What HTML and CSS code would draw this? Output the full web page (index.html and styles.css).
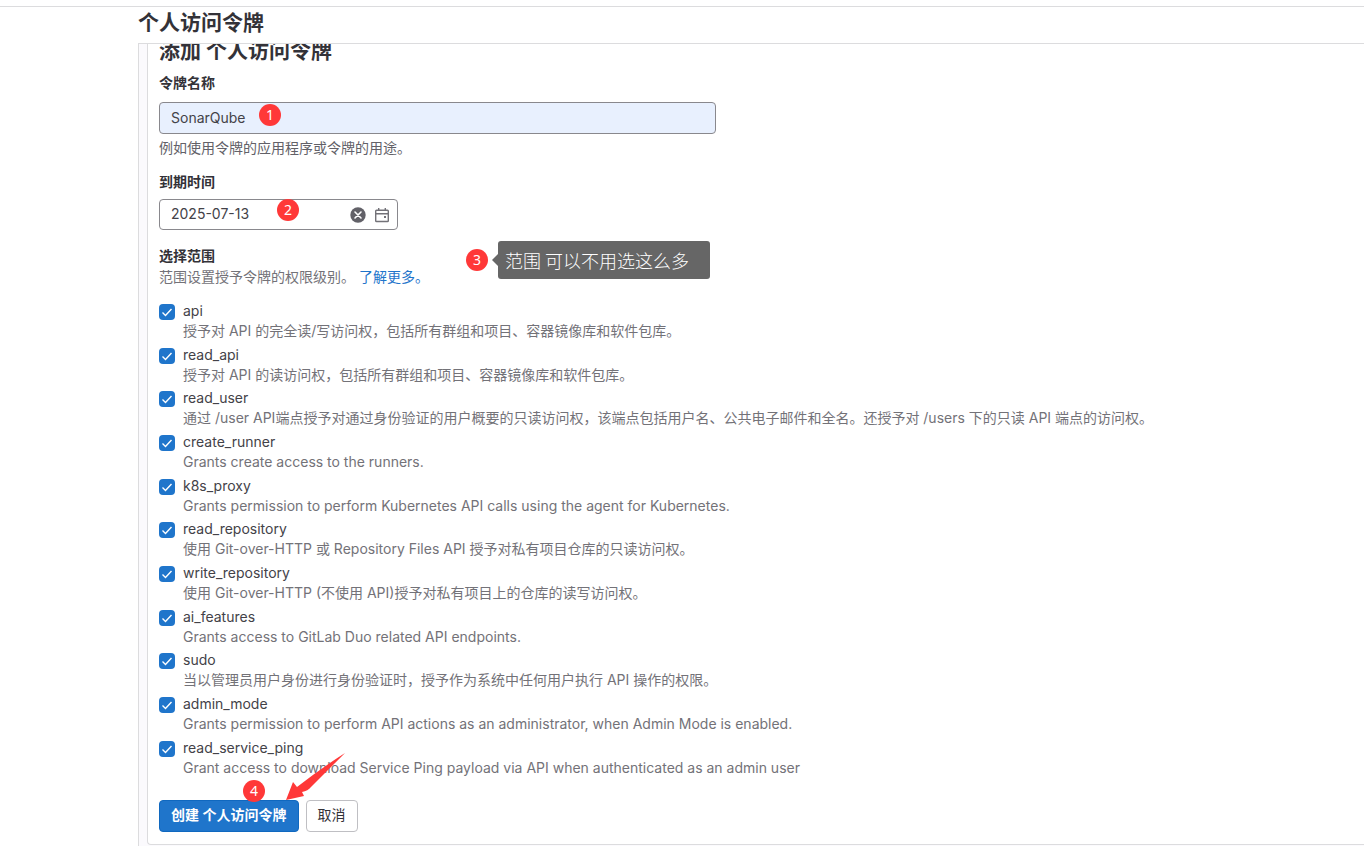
FILE: index.html
```html
<!DOCTYPE html>
<html lang="zh-CN">
<head>
    <meta charset="UTF-8">
    <meta name="viewport" content="width=device-width, initial-scale=1.0">
    <title>个人访问令牌</title>
    <link rel="stylesheet" href="styles.css">
</head>
<body>
    <div class="top-line"></div>
    <main class="page">
        <header class="page-header">
            <h1>个人访问令牌</h1>
        </header>
        <div class="panel">
            <form class="card">
                <h2 class="card-title">添加 个人访问令牌</h2>

                <!-- 令牌名称 -->
                <label class="field-label" for="token-name">令牌名称</label>
                <div class="name-field">
                    <input class="text-input name-input" id="token-name" type="text" value="SonarQube">
                    <span class="badge badge-name">1</span>
                </div>
                <p class="hint">例如使用令牌的应用程序或令牌的用途。</p>

                <!-- 到期时间 -->
                <label class="field-label" for="expires-at">到期时间</label>
                <div class="date-field">
                    <input class="text-input" id="expires-at" type="text" value="2025-07-13">
                    <div class="date-actions">
                        <button class="icon-button" type="button" aria-label="清除日期">
                            <svg width="16" height="16" viewBox="0 0 16 16">
                                <circle cx="8" cy="8" r="7.7" fill="#626168"/>
                                <path d="M5 5l6 6M11 5l-6 6" stroke="#fff" stroke-width="1.6" stroke-linecap="round"/>
                            </svg>
                        </button>
                        <button class="icon-button" type="button" aria-label="选择日期">
                            <svg width="16" height="16" viewBox="0 0 16 16" fill="none" stroke="#737278" stroke-width="1.4">
                                <rect x="1.7" y="3.2" width="12.6" height="11.3" rx="0.8"/>
                                <path d="M1.7 6.7h12.6M4.7 1v2.2M11.3 1v2.2"/>
                                <rect x="10" y="9" width="2" height="2" fill="#737278" stroke="none"/>
                            </svg>
                        </button>
                    </div>
                    <span class="badge badge-date">2</span>
                </div>

                <!-- 选择范围 -->
                <div class="scope-head">
                    <h3 class="field-label">选择范围</h3>
                    <p class="scope-text">范围设置授予令牌的权限级别。 <a href="#">了解更多。</a></p>
                    <span class="badge badge-scope">3</span>
                    <div class="callout">范围 可以不用选这么多</div>
                </div>

                <ul class="scopes">
                    <li class="scope">
                        <input type="checkbox" id="api" checked>
                        <label for="api">api</label>
                        <p>授予对 API 的完全读/写访问权，包括所有群组和项目、容器镜像库和软件包库。</p>
                    </li>
                    <li class="scope">
                        <input type="checkbox" id="read_api" checked>
                        <label for="read_api">read_api</label>
                        <p>授予对 API 的读访问权，包括所有群组和项目、容器镜像库和软件包库。</p>
                    </li>
                    <li class="scope">
                        <input type="checkbox" id="read_user" checked>
                        <label for="read_user">read_user</label>
                        <p>通过 /user API端点授予对通过身份验证的用户概要的只读访问权，该端点包括用户名、公共电子邮件和全名。还授予对 /users 下的只读 API 端点的访问权。</p>
                    </li>
                    <li class="scope">
                        <input type="checkbox" id="create_runner" checked>
                        <label for="create_runner">create_runner</label>
                        <p>Grants create access to the runners.</p>
                    </li>
                    <li class="scope">
                        <input type="checkbox" id="k8s_proxy" checked>
                        <label for="k8s_proxy">k8s_proxy</label>
                        <p>Grants permission to perform Kubernetes API calls using the agent for Kubernetes.</p>
                    </li>
                    <li class="scope">
                        <input type="checkbox" id="read_repository" checked>
                        <label for="read_repository">read_repository</label>
                        <p>使用 Git-over-HTTP 或 Repository Files API 授予对私有项目仓库的只读访问权。</p>
                    </li>
                    <li class="scope">
                        <input type="checkbox" id="write_repository" checked>
                        <label for="write_repository">write_repository</label>
                        <p>使用 Git-over-HTTP (不使用 API)授予对私有项目上的仓库的读写访问权。</p>
                    </li>
                    <li class="scope">
                        <input type="checkbox" id="ai_features" checked>
                        <label for="ai_features">ai_features</label>
                        <p>Grants access to GitLab Duo related API endpoints.</p>
                    </li>
                    <li class="scope">
                        <input type="checkbox" id="sudo" checked>
                        <label for="sudo">sudo</label>
                        <p>当以管理员用户身份进行身份验证时，授予作为系统中任何用户执行 API 操作的权限。</p>
                    </li>
                    <li class="scope">
                        <input type="checkbox" id="admin_mode" checked>
                        <label for="admin_mode">admin_mode</label>
                        <p>Grants permission to perform API actions as an administrator, when Admin Mode is enabled.</p>
                    </li>
                    <li class="scope">
                        <input type="checkbox" id="read_service_ping" checked>
                        <label for="read_service_ping">read_service_ping</label>
                        <p>Grant access to download Service Ping payload via API when authenticated as an admin user</p>
                    </li>
                </ul>

                <div class="actions">
                    <button class="btn btn-confirm" type="submit">创建 个人访问令牌</button>
                    <button class="btn" type="button">取消</button>
                    <span class="badge badge-submit">4</span>
                    <svg class="arrow" width="60" height="48" viewBox="0 0 60 48">
                        <path d="M59 0Q34 16 11 34L7 29L0 47L18 43L16 39Q22 38 25 34Z" fill="#ff3838"/>
                    </svg>
                </div>
            </form>
        </div>
    </main>
</body>
</html>
```
FILE: styles.css
```css
* {
    box-sizing: border-box;
}
body {
    margin: 0;
    padding-top: 6px;
    background-color: #fff;
    color: #333238;
    font-family: Inter, "Noto Sans CJK SC", sans-serif;
    font-size: 14px;
    line-height: 20px;
}
h1, h2, h3, p, ul {
    margin: 0;
    padding: 0;
}
a {
    color: #1f75cb;
    text-decoration: none;
}
.top-line {
    height: 1px;
    background-color: #dcdcde;
}
.page {
    margin-left: 138px;
}
.page-header {
    position: sticky;
    top: 0;
    z-index: 2;
    padding: 2px 0 6px;
    background-color: #fff;
    border-bottom: 1px solid #dcdcde;
}
h1, .card-title {
    font-size: 21px;
    line-height: 28px;
    font-weight: 700;
}
.panel {
    padding: 0 0 1px 8px;
    border-left: 1px solid #dcdcde;
    background-color: #fbfafd;
}
.card {
    padding: 0 20px 12px 11px;
    border: 1px solid #dcdcde;
    border-width: 0 0 1px 1px;
    border-radius: 0 0 0 4px;
    background-color: #fff;
}
/* scrolled partly under the sticky header */
.card-title {
    margin-top: -7px;
    margin-bottom: 8px;
}
.field-label {
    display: block;
    font-size: 14px;
    line-height: 20px;
    font-weight: 600;
}
.text-input {
    width: 100%;
    height: 31px;
    padding: 0 11px 2px;
    border: 1px solid #89888d;
    border-radius: 4px;
    background-color: #fff;
    color: #434248;
    font: inherit;
}
.name-field {
    position: relative;
    max-width: 557px;
    margin-top: 9px;
}
.name-input {
    display: block;
    height: 32px;
    background-color: #e8f0fe;
}
.hint {
    margin: 4px 0 14px;
    color: #626168;
}
.date-field {
    display: flex;
    position: relative;
    max-width: 239px;
    margin: 7px 0 16px;
}
.date-actions {
    display: flex;
    gap: 8px;
    position: absolute;
    top: 8px;
    right: 8px;
}
.icon-button {
    display: block;
    width: 16px;
    height: 16px;
    padding: 0;
    border: none;
    background: none;
    cursor: pointer;
}
.icon-button svg {
    display: block;
}
.scope-head {
    position: relative;
    margin-bottom: 14px;
}
.scope-text {
    margin-top: 1px;
    color: #737278;
}
.scopes {
    list-style: none;
}
.scope {
    display: grid;
    grid-template-columns: 16px 1fr;
    column-gap: 8px;
    margin-bottom: 4px;
}
.scope:nth-child(3n + 2) {
    margin-bottom: 3px;
}
.scope input {
    appearance: none;
    width: 16px;
    height: 16px;
    margin: 3px 0 1px;
    border-radius: 4px;
    background: #1f75cb url("data:image/svg+xml,%3Csvg xmlns='http://www.w3.org/2000/svg' viewBox='0 0 16 16'%3E%3Cpath d='M3.5 8.5l3 3 6-6.5' fill='none' stroke='%23fff' stroke-width='1.4'/%3E%3C/svg%3E");
}
.scope label {
    color: #434248;
}
.scope p {
    grid-column: 2;
    color: #737278;
}
.actions {
    display: flex;
    gap: 7px;
    position: relative;
    margin-top: 22px;
}
.btn {
    height: 32px;
    padding: 0 11px 2px;
    border: 1px solid #bfbfc3;
    border-radius: 4px;
    background-color: #fff;
    color: #333238;
    font: inherit;
    cursor: pointer;
}
.btn-confirm {
    border-color: #1068bf;
    background-color: #1f75cb;
    color: #fff;
    font-weight: 600;
}

/* numbered steps */
.badge {
    position: absolute;
    width: 22px;
    height: 22px;
    border-radius: 50%;
    background-color: #ff3838;
    color: #fff;
    font-family: "Noto Sans", sans-serif;
    line-height: 22px;
    text-align: center;
}
.badge-name {
    top: 2px;
    left: 100px;
}
.badge-date {
    top: 0;
    left: 118px;
}
.badge-scope {
    top: 3px;
    left: 307px;
}
.badge-submit {
    top: -20px;
    left: 84px;
}
.callout {
    position: absolute;
    top: -5px;
    left: 339px;
    width: 212px;
    padding: 5px 7px;
    border-radius: 3px;
    background-color: #666;
    color: #fff;
    font-family: "Noto Sans CJK SC", sans-serif;
    font-size: 18px;
    font-weight: 300;
    line-height: 28px;
}
.callout::before {
    content: "";
    position: absolute;
    top: 13px;
    left: -6px;
    border: 6px solid transparent;
    border-right-color: #666;
    border-left: none;
}
.arrow {
    position: absolute;
    top: -47px;
    left: 127px;
}
```
